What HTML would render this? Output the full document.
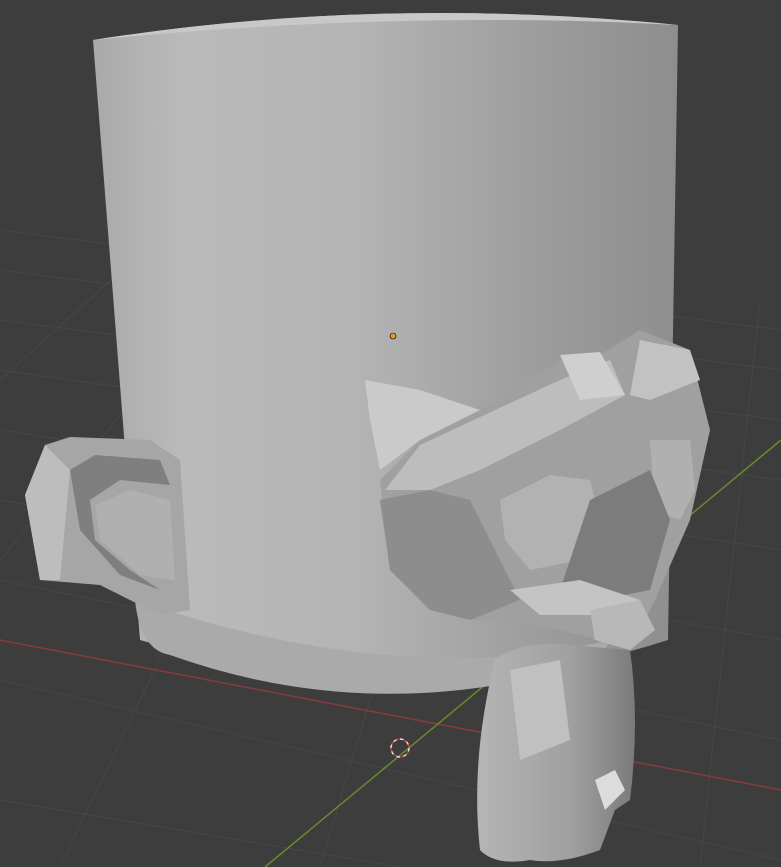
<!DOCTYPE html>
<html><head><meta charset="utf-8"><style>html,body{margin:0;padding:0;background:#3d3d3d;overflow:hidden}svg{display:block}</style></head><body>
<svg width="781" height="867" viewBox="0 0 781 867" xmlns="http://www.w3.org/2000/svg">
<defs>
<linearGradient id="cyl" x1="0" x2="1" y1="0" y2="0">
<stop offset="0" stop-color="#a9a9a9"/><stop offset="0.15" stop-color="#bababa"/><stop offset="0.45" stop-color="#b4b4b4"/><stop offset="0.8" stop-color="#9a9a9a"/><stop offset="1" stop-color="#8e8e8e"/></linearGradient>
<linearGradient id="stalk" x1="0" x2="1"><stop offset="0" stop-color="#b5b5b5"/><stop offset="0.6" stop-color="#a0a0a0"/><stop offset="1" stop-color="#7a7a7a"/></linearGradient>
</defs>
<rect width="781" height="867" fill="#3d3d3d"/>
<g stroke="#474747" stroke-width="1" fill="none">
<path d="M0 230 L781 330 M0 270 L781 370 M0 320 L781 420 M0 370 L781 480 M0 430 L781 550 M0 500 L781 640 M0 580 L781 740 M0 680 L781 860 M0 800 L400 867"/>
<path d="M0 560 L300 200 M60 867 L380 200 M320 867 L520 200 M520 867 L640 240 M700 867 L760 300 M0 380 L200 200"/>
</g>
<path d="M0 640 L781 790" stroke="#8a3a3e" stroke-width="1.5"/>
<path d="M265 867 L781 440" stroke="#6a8a2a" stroke-width="1.5"/>
<path d="M93 40 Q380 -5 678 25 L668 640 Q420 720 140 640 Z" fill="url(#cyl)"/>
<path d="M93 40 Q380 -5 678 25 Q400 10 93 40 Z" fill="#c8c8c8"/>
<path d="M135 600 Q140 650 170 655 Q380 730 600 660 L610 640 Q400 690 135 600Z" fill="#aaaaaa"/>
<polygon points="25,495 45,445 70,437 150,440 180,460 190,610 160,615 100,585 40,580" fill="#a6a6a6"/>
<polygon points="70,470 95,455 160,460 170,485 120,480 90,500 95,540 130,570 160,590 120,575 80,530" fill="#7f7f7f"/>
<polygon points="25,495 45,445 70,470 60,580 40,580" fill="#bdbdbd"/>
<polygon points="95,505 130,490 170,500 175,580 140,575 100,540" fill="#b0b0b0"/>
<polygon points="380,480 420,440 500,400 560,360 600,355 640,330 690,350 710,430 690,520 655,600 640,630 600,640 540,625 470,620 430,610 390,570" fill="#a0a0a0"/>
<polygon points="420,445 560,380 610,360 625,395 560,430 480,470 430,490 385,490" fill="#bdbdbd"/>
<polygon points="560,355 600,352 625,395 580,400" fill="#cfcfcf"/>
<polygon points="640,340 690,350 700,380 650,400 630,395" fill="#c2c2c2"/>
<polygon points="380,500 430,490 470,500 490,540 520,600 470,620 430,610 390,570" fill="#8d8d8d"/>
<polygon points="500,500 550,475 590,480 600,520 580,560 530,570 505,540" fill="#b2b2b2"/>
<polygon points="650,440 690,440 695,490 680,520 655,510" fill="#b0b0b0"/>
<polygon points="590,500 650,470 670,520 650,590 600,600 560,590" fill="#7c7c7c"/>
<polygon points="510,590 580,580 640,600 610,615 540,615" fill="#c4c4c4"/>
<polygon points="590,610 640,600 655,630 630,650 595,640" fill="#b8b8b8"/>
<polygon points="365,380 420,390 480,410 420,440 380,470 370,420" fill="#cacaca"/>
<path d="M495 660 Q520 640 570 645 L630 650 Q640 720 630 800 L615 810 L600 850 Q560 865 530 860 Q495 866 480 850 Q470 760 495 660 Z" fill="url(#stalk)"/>
<polygon points="510,670 560,660 570,740 520,760" fill="#c0c0c0"/>
<polygon points="595,780 615,770 625,790 605,810" fill="#dcdcdc"/>
<circle cx="393" cy="336" r="3" fill="#e8952a" stroke="#000" stroke-width="0.6"/>
<circle cx="400" cy="748" r="9" fill="none" stroke="#ddd" stroke-width="1.5" stroke-dasharray="4 3"/>
<circle cx="400" cy="748" r="9" fill="none" stroke="#d33" stroke-width="1.5" stroke-dasharray="3 4" stroke-dashoffset="3.5"/>
</svg>
</body></html>
